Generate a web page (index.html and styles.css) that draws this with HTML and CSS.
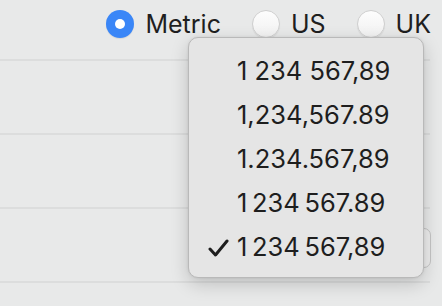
FILE: index.html
```html
<!DOCTYPE html>
<html lang="en">
<head>
    <meta charset="UTF-8">
    <meta name="viewport" content="width=device-width, initial-scale=1.0">
    <title>Number format</title>
    <link rel="stylesheet" href="styles.css">
</head>
<body>
    <div class="ventana">
        <div class="cabecera">
            <label class="radio"><span class="radio-circulo activo"></span>Metric</label>
            <label class="radio"><span class="radio-circulo"></span>US</label>
            <label class="radio"><span class="radio-circulo"></span>UK</label>
        </div>

        <div class="fila"></div>
        <div class="fila"></div>
        <div class="fila"><span class="control"></span></div>

        <div class="menu-formato">
            <div class="menu-opcion">1 234 567,89</div>
            <div class="menu-opcion">1,234,567.89</div>
            <div class="menu-opcion">1.234.567,89</div>
            <div class="menu-opcion">1&#8239;234&#8239;567.89</div>
            <div class="menu-opcion seleccionada">
                <svg class="check" width="22" height="18" viewBox="0 0 22 18">
                    <path d="M2 10 L7.5 16 L19 2" fill="none" stroke="#1e1e1e" stroke-width="3" stroke-linecap="round" stroke-linejoin="round"/>
                </svg>
                1&#8239;234&#8239;567,89
            </div>
        </div>
    </div>
</body>
</html>
```

FILE: styles.css
```css
body {
    margin: 0;
    background-color: #e8e9e9;
    font-family: Inter, "Noto Sans", sans-serif;
    color: #1f1f1f;
}

.ventana {
    position: relative;
    width: 442px;
    height: 306px;
    overflow: hidden;
}

.cabecera {
    height: 61px;
    box-sizing: border-box;
    display: flex;
    justify-content: flex-end;
    align-items: flex-start;
    padding: 10px 0 0 0;
    margin-right: 12px;
    gap: 32px;
    border-bottom: 2px solid #dcdddd;
}

.radio {
    display: flex;
    align-items: center;
    gap: 11px;
    font-size: 25px;
    line-height: 28px;
    margin-right: -1px;
}

.radio-circulo {
    width: 26px;
    height: 26px;
    border-radius: 50%;
    background: linear-gradient(#fdfdfd, #f1f1f1);
    border: 1px solid #cfcfcf;
    box-shadow: 0 1px 1px rgba(0,0,0,0.08);
}

.radio-circulo.activo {
    width: 28px;
    height: 28px;
    border: none;
    background: #3a86f7;
    position: relative;
}

.radio-circulo.activo::after {
    content: "";
    position: absolute;
    left: 9px;
    top: 9px;
    width: 10px;
    height: 10px;
    border-radius: 50%;
    background: white;
}

.fila {
    position: relative;
    height: 74px;
    box-sizing: border-box;
    border-bottom: 2px solid #dcdddd;
    margin-right: 12px;
}

/* control parcialmente tapado por el menú */
.control {
    position: absolute;
    right: -1px;
    top: 19px;
    width: 40px;
    height: 38px;
    border-radius: 7px;
    background: #ececec;
    border: 1px solid #c4c4c4;
}

.menu-formato {
    position: absolute;
    left: 188px;
    top: 37px;
    width: 236px;
    height: 241px;
    box-sizing: border-box;
    padding: 11px 0 10px;
    background-color: #e5e5e5;
    border: 1px solid #b9b9b9;
    border-radius: 10px;
    box-shadow: 0 6px 18px rgba(0,0,0,0.18), 0 0 3px rgba(0,0,0,0.08);
}

.menu-opcion {
    position: relative;
    height: 44px;
    line-height: 44px;
    padding-left: 48px;
    font-size: 25.5px;
    color: #1e1e1e;
    white-space: nowrap;
}

.check {
    position: absolute;
    left: 19px;
    top: 14px;
}
```
